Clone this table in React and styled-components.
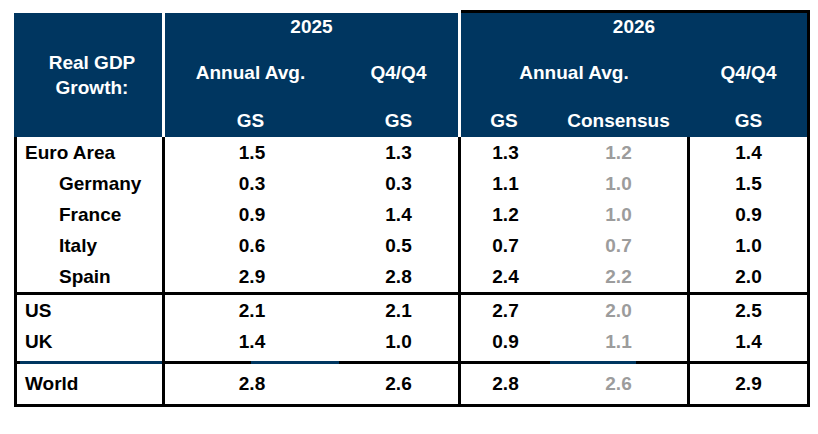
import React from 'react'
import styled, { createGlobalStyle } from 'styled-components'

const NAVY = '#003660'
const GREY = '#9c9c9c'
const COLS = '151px 174px 122px 89px 140px 120px'

const GlobalStyle = createGlobalStyle`
  html, body {
    margin: 0;
    padding: 0;
    background: #fff;
  }
  body {
    font-family: "Liberation Sans", Arial, sans-serif;
    font-weight: bold;
    font-size: 19px;
    color: #000;
  }
`

const groups = [
  {
    rows: [
      { label: 'Euro Area', values: ['1.5', '1.3', '1.3', '1.2', '1.4'] },
      { label: 'Germany', sub: true, values: ['0.3', '0.3', '1.1', '1.0', '1.5'] },
      { label: 'France', sub: true, values: ['0.9', '1.4', '1.2', '1.0', '0.9'] },
      { label: 'Italy', sub: true, values: ['0.6', '0.5', '0.7', '0.7', '1.0'] },
      { label: 'Spain', sub: true, values: ['2.9', '2.8', '2.4', '2.2', '2.0'] },
    ],
  },
  {
    divider: true,
    rows: [
      { label: 'US', values: ['2.1', '2.1', '2.7', '2.0', '2.5'] },
      { label: 'UK', values: ['1.4', '1.0', '0.9', '1.1', '1.4'], tall: true },
    ],
  },
  {
    rows: [
      { label: 'World', values: ['2.8', '2.6', '2.8', '2.6', '2.9'], height: 40 },
    ],
  },
]

// columns that carry a black rule on their right side
const EDGES = [false, true, false, true, true]

const App = () => (
  <Page>
    <GlobalStyle />
    <Table>
      <Head>
        <LabelHead>Real GDP<br />Growth:</LabelHead>
        <YearHead $cols="2 / 4" $edge="#fff" $top="#fff">2025</YearHead>
        <YearHead $cols="4 / 7" $edge="#000" $top="#000">2026</YearHead>

        <SubHead $cols="2 / 3">Annual Avg.</SubHead>
        <SubHead $cols="3 / 4" $edge="#fff">Q4/Q4</SubHead>
        <SubHead $cols="4 / 6">Annual Avg.</SubHead>
        <SubHead $cols="6 / 7" $edge="#000">Q4/Q4</SubHead>

        <SourceHead $cols="2 / 3">GS</SourceHead>
        <SourceHead $cols="3 / 4" $edge="#fff">GS</SourceHead>
        <SourceHead $cols="4 / 5">GS</SourceHead>
        <SourceHead $cols="5 / 6">Consensus</SourceHead>
        <SourceHead $cols="6 / 7" $edge="#000">GS</SourceHead>
      </Head>

      {groups.map((group, gi) => (
        <React.Fragment key={gi}>
          <Group $ruled={!group.divider}>
            {group.rows.map((row) => (
              <Row key={row.label} $height={row.height || (row.tall ? 35 : 31)}>
                <LabelCell $sub={row.sub} $tall={row.tall}>{row.label}</LabelCell>
                {row.values.map((v, i) => (
                  <ValueCell key={i} $edge={EDGES[i]} $grey={i === 3} $tall={row.tall}>
                    {v}
                  </ValueCell>
                ))}
              </Row>
            ))}
          </Group>
          {group.divider && (
            <Divider>
              <RuleCell><Segment $x={6} $w={142} /></RuleCell>
              <RuleCell><Segment $x={86} $w={88} /></RuleCell>
              <RuleCell />
              <RuleCell />
              <RuleCell><Segment $x={0} $w={86} /></RuleCell>
              <RuleCell />
            </Divider>
          )}
        </React.Fragment>
      ))}
    </Table>
  </Page>
)

const Page = styled.div`
  padding: 10px 0 0 14px;
  width: 818px;
  height: 434px;
  box-sizing: border-box;
  overflow: hidden;
`

const Table = styled.div`
  width: 796px;
`

const Head = styled.div`
  display: grid;
  grid-template-columns: ${COLS};
  grid-template-rows: 31px 64px 32px;
  color: #fff;
`

const HeadCell = styled.div`
  grid-column: ${(p) => p.$cols};
  background: ${NAVY};
  border-right: 3px solid ${(p) => p.$edge || NAVY};
  display: flex;
  align-items: center;
  justify-content: center;
  white-space: nowrap;
  box-sizing: border-box;
`

const LabelHead = styled(HeadCell)`
  grid-column: 1 / 2;
  grid-row: 1 / 4;
  border-top: 3px solid #fff;
  border-right: 3px solid #fff;
  padding-left: 8px;
  text-align: center;
  line-height: 25px;
`

const YearHead = styled(HeadCell)`
  grid-row: 1 / 2;
  border-top: 3px solid ${(p) => p.$top};
`

const SubHead = styled(HeadCell)`
  grid-row: 2 / 3;
`

const SourceHead = styled(HeadCell)`
  grid-row: 3 / 4;
`

const Group = styled.div`
  border-bottom: ${(p) => (p.$ruled ? '3px solid #000' : 'none')};
`

const Row = styled.div`
  display: grid;
  grid-template-columns: ${COLS};
  height: ${(p) => p.$height}px;
`

const Cell = styled.div`
  display: flex;
  align-items: center;
  box-sizing: border-box;
  white-space: nowrap;
  padding-bottom: ${(p) => (p.$tall ? 4 : 0)}px;
`

const LabelCell = styled(Cell)`
  border-left: 3px solid #000;
  border-right: 3px solid #000;
  padding-left: ${(p) => (p.$sub ? 42 : 8)}px;
`

const ValueCell = styled(Cell)`
  justify-content: center;
  border-right: ${(p) => (p.$edge ? '3px solid #000' : 'none')};
  color: ${(p) => (p.$grey ? GREY : '#000')};
`

const Divider = styled.div`
  display: grid;
  grid-template-columns: ${COLS};
  height: 3px;
`

const RuleCell = styled.div`
  background: #000;
  display: flex;
`

const Segment = styled.div`
  margin-left: ${(p) => p.$x}px;
  width: ${(p) => p.$w}px;
  background: ${NAVY};
`

export default App
